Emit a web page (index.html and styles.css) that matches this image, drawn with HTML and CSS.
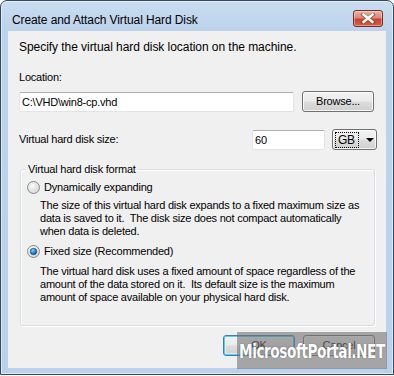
FILE: index.html
```html
<!DOCTYPE html>
<html>
<head>
<meta charset="utf-8">
<link rel="stylesheet" href="styles.css">
</head>
<body>
<div class="window">
  <div class="titlebar">
    <span class="title">Create and Attach Virtual Hard Disk</span>
    <div class="close">
      <svg width="16" height="11" viewBox="0 0 16 11"><path d="M3 1.5 L13 9.5 M13 1.5 L3 9.5" stroke="#6b2a22" stroke-width="4" stroke-linecap="square" opacity="0.45"/><path d="M3.5 1.5 L12.5 9 M12.5 1.5 L3.5 9" stroke="#fff" stroke-width="2.4" stroke-linecap="square"/></svg>
    </div>
  </div>
  <div class="client">
    <p class="intro">Specify the virtual hard disk location on the machine.</p>
    <div class="lbl loc-lbl">Location:</div>
    <div class="row loc-row">
      <div class="textbox path">C:\VHD\win8-cp.vhd</div>
      <div class="btn browse">Browse...</div>
    </div>
    <div class="row size-row">
      <span class="lbl size-lbl">Virtual hard disk size:</span>
      <div class="textbox size">60</div>
      <div class="combo"><span class="combo-val">GB</span><span class="arrow"></span></div>
    </div>
    <fieldset class="group">
      <legend>Virtual hard disk format</legend>
      <div class="radio-row">
        <svg class="radio" width="13" height="13" viewBox="0 0 13 13"><defs><radialGradient id="rg1" cx="0.35" cy="0.3" r="0.8"><stop offset="0" stop-color="#ffffff"/><stop offset="1" stop-color="#cfcfcf"/></radialGradient></defs><circle cx="6.5" cy="6.5" r="6" fill="url(#rg1)" stroke="#8a8a8a"/><circle cx="6.5" cy="6.5" r="4.2" fill="none" stroke="#e6e6e6"/></svg>
        <span>Dynamically expanding</span>
      </div>
      <p class="desc">The size of this virtual hard disk expands to a fixed maximum size as<br>data is saved to it.&nbsp; The disk size does not compact automatically<br>when data is deleted.</p>
      <div class="radio-row second">
        <svg class="radio" width="13" height="13" viewBox="0 0 13 13"><defs><radialGradient id="rg2" cx="0.35" cy="0.3" r="0.8"><stop offset="0" stop-color="#ffffff"/><stop offset="1" stop-color="#cfcfcf"/></radialGradient><radialGradient id="dot" cx="0.4" cy="0.35" r="0.7"><stop offset="0" stop-color="#8fd3ff"/><stop offset="0.5" stop-color="#2a8ad4"/><stop offset="1" stop-color="#0b4a86"/></radialGradient></defs><circle cx="6.5" cy="6.5" r="6" fill="url(#rg2)" stroke="#8a8a8a"/><circle cx="6.5" cy="6.5" r="3.3" fill="url(#dot)" stroke="#1b4f7a" stroke-width="0.6"/></svg>
        <span>Fixed size (Recommended)</span>
      </div>
      <p class="desc second">The virtual hard disk uses a fixed amount of space regardless of the<br>amount of the data stored on it.&nbsp; Its default size is the maximum<br>amount of space available on your physical hard disk.</p>
    </fieldset>
    <div class="actions">
      <div class="btn ok">OK</div>
      <div class="btn cancel">Cancel</div>
    </div>
  </div>
  <div class="watermark"><span>MicrosoftPortal.NET</span></div>
</div>
</body>
</html>
```
FILE: styles.css
```css
html, body {
  margin: 0;
  background: #ffffff;
}
body {
  font-family: "Liberation Sans", Arial, sans-serif;
  font-size: 11px;
  letter-spacing: -0.22px;
  color: #000;
}
.window {
  position: relative;
  width: 394px;
  height: 375px;
  box-sizing: border-box;
  border: 1px solid #34475c;
  border-radius: 7px 7px 0 0;
  background: linear-gradient(#c9dcf1 0px, #bcd3ec 30px, #b9d1ea 100%);
  box-shadow: inset 0 0 0 1px rgba(255,255,255,0.55), 0 1px 0 #3ccfe0;
  display: flex;
  flex-direction: column;
  padding: 0 7px 6px 7px;
}
.titlebar {
  height: 30px;
  flex: none;
  display: flex;
  align-items: flex-start;
  justify-content: space-between;
}
.title {
  padding: 12px 0 0 4px;
  line-height: 15px;
  font-size: 12px;
  letter-spacing: -0.1px;
}
.close {
  margin-top: 9px;
  margin-right: 3px;
  width: 28px;
  height: 15px;
  border: 1px solid #7d2b23;
  border-radius: 3px;
  background: linear-gradient(#eab3a7 0%, #dc8878 45%, #c8422f 55%, #d2624a 100%);
  box-shadow: inset 0 0 0 1px rgba(255,255,255,0.35);
  display: flex;
  align-items: center;
  justify-content: center;
}
.client {
  flex: 1;
  min-height: 0;
  background: #f0f0f0;
  padding: 9px 11px 0 11px;
  display: flex;
  flex-direction: column;
  white-space: nowrap;
}
.intro {
  margin: 0;
  font-size: 12px;
  line-height: 15px;
  letter-spacing: -0.05px;
}
.lbl {
  line-height: 13px;
}
.loc-lbl {
  margin-top: 16px;
}
.row {
  display: flex;
  align-items: center;
  flex: none;
}
.loc-row {
  margin-top: 7px;
  height: 21px;
}
.textbox {
  box-sizing: border-box;
  height: 20px;
  background: #fff;
  border: 1px solid #e2e3ea;
  border-top-color: #abadb3;
  border-radius: 2px;
  line-height: 13px;
  padding: 3px 2px 0 2px;
}
.path {
  width: 275px;
  margin-top: 1px;
}
.btn {
  box-sizing: border-box;
  height: 21px;
  border: 1px solid #707070;
  border-radius: 3px;
  background: linear-gradient(#f2f2f2 0%, #ebebeb 48%, #dddddd 52%, #cfcfcf 100%);
  box-shadow: inset 0 0 0 1px rgba(255,255,255,0.8);
  display: flex;
  align-items: center;
  justify-content: center;
  line-height: 13px;
}
.browse {
  width: 72px;
  margin-left: 8px;
}
.size-row {
  margin-top: 17px;
  height: 21px;
}
.size-lbl {
  flex: 1;
}
.size {
  width: 73px;
}
.combo {
  box-sizing: border-box;
  width: 45px;
  height: 21px;
  margin-left: 7px;
  margin-right: -2px;
  border: 1px solid #707070;
  border-radius: 3px;
  background: linear-gradient(#f2f2f2 0%, #ebebeb 48%, #dddddd 52%, #cfcfcf 100%);
  box-shadow: inset 0 0 0 1px rgba(255,255,255,0.8);
  display: flex;
  align-items: center;
  padding-left: 2px;
}
.combo-val {
  border: 1px dotted #000;
  padding: 0 2px;
  line-height: 14px;
  font-size: 12px;
  width: 18px;
}
.arrow {
  margin-left: 7px;
  width: 0;
  height: 0;
  border-left: 4px solid transparent;
  border-right: 4px solid transparent;
  border-top: 4px solid #000;
}
.group {
  flex: none;
  margin: 13px 0 0 1px;
  width: 355px;
  box-sizing: border-box;
  height: 163px;
  padding: 0 0 0 6px;
  border: 1px solid #d5dfe5;
  border-radius: 3px;
  box-shadow: inset 1px 1px 0 #fff, 1px 1px 0 #fff;
}
.group legend {
  margin-left: -1px;
  padding: 0 2px;
  line-height: 13px;
}
.radio-row {
  display: flex;
  align-items: center;
  height: 13px;
  line-height: 13px;
  margin-top: 5px;
}
.radio-row.second {
  margin-top: 7px;
}
.radio {
  margin-right: 4px;
}
.desc {
  margin: 5px 0 0 13px;
  line-height: 13px;
}
.desc.second {
  margin-top: 7px;
}
.actions {
  flex: none;
  display: flex;
  justify-content: flex-end;
  margin-top: 9px;
}
.ok {
  width: 72px;
  border-color: #3c7fb1;
  box-shadow: inset 0 0 0 1px #48d3fb, inset 0 0 0 2px rgba(255,255,255,0.5);
}
.cancel {
  width: 72px;
  margin-left: 8px;
}
.watermark {
  position: absolute;
  left: 236px;
  top: 331px;
  width: 150px;
  height: 37px;
  background: rgba(115,115,115,0.6);
  color: #fff;
  font-family: "DejaVu Sans Condensed", "Liberation Sans", sans-serif;
  font-weight: bold;
  font-size: 20px;
  letter-spacing: -0.6px;
  display: flex;
  align-items: center;
  justify-content: center;
  text-shadow: 0 0 1px #444;
  white-space: nowrap;
}
.watermark span {
  display: inline-block;
  transform: scaleX(0.76);
}
```
